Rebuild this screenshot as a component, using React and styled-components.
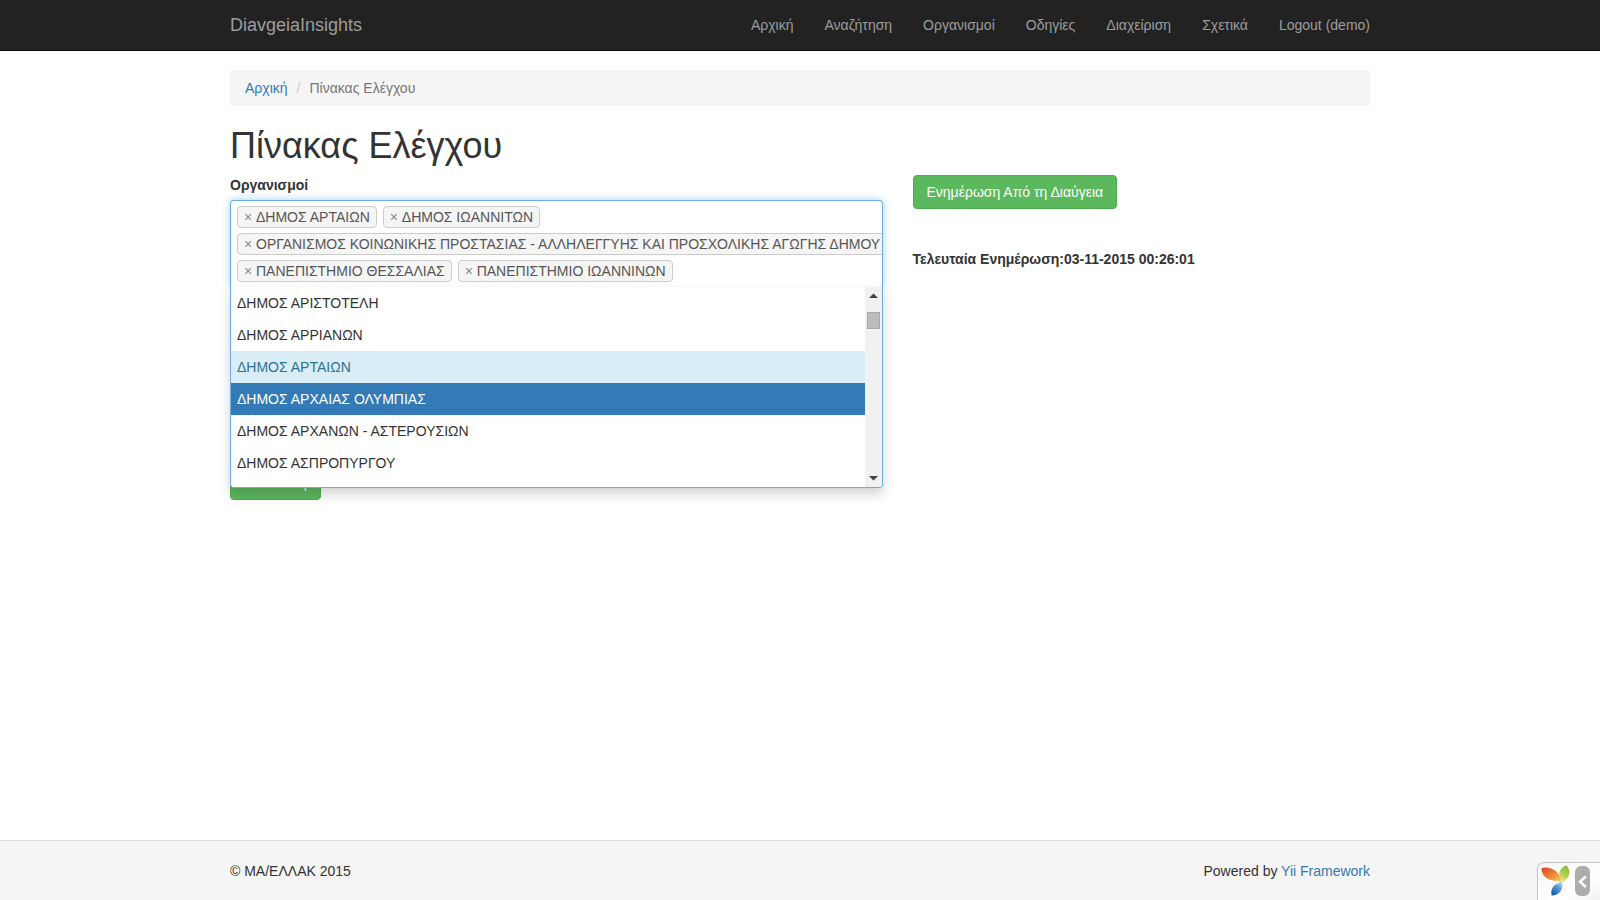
import React from 'react';
import styled, { createGlobalStyle, css } from 'styled-components';

const GlobalStyle = createGlobalStyle`
  *, *::before, *::after { box-sizing: border-box; }
  body {
    margin: 0;
    background: #fff;
    color: #333;
    font: 14px/20px "Liberation Sans", Arial, sans-serif;
  }
  a { color: #337ab7; text-decoration: none; }
  button, input { font: inherit; }
`;

const Page = styled.div`
  min-height: 100vh;
  display: flex;
  flex-direction: column;
`;

const Container = styled.div`
  width: 100%;
  max-width: 1170px;
  margin: 0 auto;
  padding: 0 15px;
`;

const Navbar = styled.nav`
  background: #222;
  border-bottom: 1px solid #080808;
`;

const NavInner = styled(Container)`
  display: flex;
  align-items: center;
  justify-content: space-between;
  height: 50px;
`;

const Brand = styled.a`
  color: #9d9d9d;
  font-size: 18px;
`;

const NavList = styled.ul`
  display: flex;
  gap: 31px;
  list-style: none;
  margin: 0;
  padding: 0;
`;

const NavLink = styled.a`
  color: #9d9d9d;
`;

const Main = styled(Container).attrs({ as: 'main' })`
  padding-top: 19px;
  flex: 1;
`;

const Breadcrumb = styled.ol`
  display: flex;
  list-style: none;
  margin: 0 0 20px;
  padding: 8px 15px;
  background: #f5f5f5;
  border-radius: 4px;
`;

const Crumb = styled.li`
  color: #777;
  & + &::before {
    content: "/";
    padding: 0 9px;
    color: #ccc;
  }
`;

const Title = styled.h1`
  margin: 0 0 9px;
  font-size: 36px;
  line-height: 40px;
  font-weight: 500;
`;

const Columns = styled.div`
  display: grid;
  grid-template-columns: 7fr 5fr;
  margin: 0 -15px;
`;

const Column = styled.div`
  min-width: 0;
  padding: 0 15px;
`;

const Label = styled.label`
  display: block;
  margin-bottom: 5px;
  font-weight: 700;
`;

const Field = styled.div`
  position: relative;
  margin-bottom: 179px;
`;

const Selection = styled.div`
  display: flex;
  flex-wrap: wrap;
  gap: 5px 6px;
  padding: 5px 0 5px 6px;
  overflow: hidden;
  border: 1px solid #66afe9;
  border-bottom: 0;
  border-radius: 4px 4px 0 0;
  background: #fff;
  box-shadow: 0 0 8px rgba(102, 175, 233, 0.6);
`;

const Tag = styled.span`
  display: flex;
  flex: none;
  align-items: center;
  gap: 4px;
  height: 22px;
  padding: 0 6px;
  border: 1px solid #ccc;
  border-radius: 4px;
  background: #f5f5f5;
  color: #555;
  white-space: nowrap;
`;

const RemoveButton = styled.button`
  width: 8px;
  border: 0;
  padding: 0;
  background: none;
  color: #888;
  line-height: 20px;
  text-align: center;
`;

const SearchInput = styled.input`
  flex: 1;
  min-width: 100px;
  height: 22px;
  padding: 0;
  border: 0;
  outline: 0;
  background: transparent;
`;

const Dropdown = styled.div`
  position: absolute;
  top: 100%;
  left: 0;
  right: 0;
  display: flex;
  height: 201px;
  overflow: hidden;
  border: 1px solid #66afe9;
  border-top: 0;
  border-radius: 0 0 4px 4px;
  background: #fff;
  box-shadow: 0 6px 12px rgba(0, 0, 0, 0.18);
`;

const Options = styled.ul`
  flex: 1;
  margin: 0;
  padding: 0;
  list-style: none;
  overflow: hidden;
`;

const Option = styled.li`
  padding: 6px;
  ${({ $state }) => $state === 'selected' && css`
    background: #d9edf7;
    color: #31708f;
  `}
  ${({ $state }) => $state === 'active' && css`
    background: #337ab7;
    color: #fff;
  `}
`;

const ScrollTrack = styled.div`
  display: flex;
  flex-direction: column;
  align-items: center;
  width: 17px;
  background: #f1f1f1;
`;

const ScrollArrow = styled.svg`
  display: block;
  width: 17px;
  height: 17px;
`;

const ScrollThumb = styled.div`
  width: 13px;
  height: 17px;
  margin: 8px 0 auto;
  border: 1px solid #a8a8a8;
  background: #bcbcbc;
`;

const Button = styled.button`
  display: block;
  height: 34px;
  padding: 6px 13px;
  border: 1px solid #4cae4c;
  border-radius: 4px;
  background: #5cb85c;
  color: #fff;
  line-height: 20px;
`;

const UpdateInfo = styled.p`
  margin: 40px 0 0;
  font-weight: 700;
`;

const Footer = styled.footer`
  height: 60px;
  padding-top: 20px;
  border-top: 1px solid #ddd;
  background: #f5f5f5;
`;

const FooterInner = styled(Container)`
  display: flex;
  justify-content: space-between;
`;

const DebugBar = styled.div`
  position: fixed;
  right: 0;
  bottom: 0;
  display: flex;
  gap: 5px;
  width: 63px;
  height: 38px;
  padding: 2px 0 0 3px;
  border: 1px solid #c4c4c4;
  border-width: 1px 0 0 1px;
  border-radius: 7px 0 0 0;
  background: linear-gradient(to bottom right, #f7f7f7, #fff 70%, #f1f1f1);
`;

const Logo = styled.svg`
  width: 29px;
  height: 32px;
`;

const DebugToggle = styled.button`
  width: 15px;
  height: 30px;
  margin-top: 1px;
  padding: 0;
  border: 0;
  border-radius: 6px;
  background: #adadad;
  svg { display: block; }
`;

const navItems = ['Αρχική', 'Αναζήτηση', 'Οργανισμοί', 'Οδηγίες', 'Διαχείριση', 'Σχετικά', 'Logout (demo)'];

const tags = [
  'ΔΗΜΟΣ ΑΡΤΑΙΩΝ',
  'ΔΗΜΟΣ ΙΩΑΝΝΙΤΩΝ',
  'ΟΡΓΑΝΙΣΜΟΣ ΚΟΙΝΩΝΙΚΗΣ ΠΡΟΣΤΑΣΙΑΣ - ΑΛΛΗΛΕΓΓΥΗΣ ΚΑΙ ΠΡΟΣΧΟΛΙΚΗΣ ΑΓΩΓΗΣ ΔΗΜΟΥ',
  'ΠΑΝΕΠΙΣΤΗΜΙΟ ΘΕΣΣΑΛΙΑΣ',
  'ΠΑΝΕΠΙΣΤΗΜΙΟ ΙΩΑΝΝΙΝΩΝ',
];

const options = [
  { name: 'ΔΗΜΟΣ ΑΡΙΣΤΟΤΕΛΗ' },
  { name: 'ΔΗΜΟΣ ΑΡΡΙΑΝΩΝ' },
  { name: 'ΔΗΜΟΣ ΑΡΤΑΙΩΝ', state: 'selected' },
  { name: 'ΔΗΜΟΣ ΑΡΧΑΙΑΣ ΟΛΥΜΠΙΑΣ', state: 'active' },
  { name: 'ΔΗΜΟΣ ΑΡΧΑΝΩΝ - ΑΣΤΕΡΟΥΣΙΩΝ' },
  { name: 'ΔΗΜΟΣ ΑΣΠΡΟΠΥΡΓΟΥ' },
];

function YiiLogo() {
  return (
    <Logo viewBox="0 0 29 32" aria-label="Yii" role="img">
      <defs>
        <linearGradient id="orange" x1="0" y1="0" x2="1" y2="1">
          <stop offset="0" stopColor="#d8452f" />
          <stop offset="0.5" stopColor="#ec8236" />
          <stop offset="1" stopColor="#fbd05b" />
        </linearGradient>
        <linearGradient id="green" x1="0.8" y1="0" x2="0.4" y2="1">
          <stop offset="0" stopColor="#84ba45" />
          <stop offset="0.6" stopColor="#b3d14a" />
          <stop offset="1" stopColor="#e8ea80" />
        </linearGradient>
        <linearGradient id="blue" x1="0.8" y1="0" x2="0.3" y2="1">
          <stop offset="0" stopColor="#d5ebf7" />
          <stop offset="0.45" stopColor="#5b9fd6" />
          <stop offset="1" stopColor="#1557a8" />
        </linearGradient>
      </defs>
      <path fill="url(#green)" d="M25.500 .5C28.600 3.500 29.200 7.800 27.400 11.300C26 14 23.600 15.500 21.600 17.800C20.800 14.500 18.300 13 18.300 9C18.300 5 21.500 1.500 25.500 .5Z" />
      <path fill="url(#orange)" d="M.5 3C5 1.600 11 2.600 15.200 6.500C18.400 9.500 20 13 20.300 16.800C16.500 15.500 11.500 16.500 6.500 13.800C2.500 11.500 .5 7.300 .5 3Z" />
      <path fill="url(#blue)" d="M20.400 14.500C22 18.500 22 23 19.300 26.500C17.200 29.200 14 30.500 10.600 30.500C9.800 27 10.600 23.200 13 20.800C15.300 18.500 19 18.200 20.400 14.500Z" />
    </Logo>
  );
}

export default function App() {
  return (
    <Page>
      <GlobalStyle />
      <Navbar>
        <NavInner>
          <Brand href="#">DiavgeiaInsights</Brand>
          <NavList>
            {navItems.map((item) => (
              <li key={item}><NavLink href="#">{item}</NavLink></li>
            ))}
          </NavList>
        </NavInner>
      </Navbar>

      <Main>
        <Breadcrumb>
          <Crumb><a href="#">Αρχική</a></Crumb>
          <Crumb>Πίνακας Ελέγχου</Crumb>
        </Breadcrumb>
        <Title>Πίνακας Ελέγχου</Title>
        <Columns>
          <Column>
            <Label htmlFor="organizations">Οργανισμοί</Label>
            <Field>
              <Selection>
                {tags.map((tag) => (
                  <Tag key={tag}>
                    <RemoveButton type="button">×</RemoveButton>
                    {tag}
                  </Tag>
                ))}
                <SearchInput id="organizations" type="text" autoComplete="off" />
              </Selection>
              <Dropdown>
                <Options role="listbox" aria-label="Οργανισμοί">
                  {options.map(({ name, state }) => (
                    <Option key={name} role="option" aria-selected={state === 'selected'} $state={state}>
                      {name}
                    </Option>
                  ))}
                </Options>
                <ScrollTrack aria-hidden="true">
                  <ScrollArrow viewBox="0 0 17 17"><path fill="#444" d="M4 11L8.500 6.500L13 11Z" /></ScrollArrow>
                  <ScrollThumb />
                  <ScrollArrow viewBox="0 0 17 17"><path fill="#444" d="M4 6L8.500 10.500L13 6Z" /></ScrollArrow>
                </ScrollTrack>
              </Dropdown>
            </Field>
            <Button type="submit">Αποστολή</Button>
          </Column>
          <Column>
            <Button type="button">Ενημέρωση Από τη Διαύγεια</Button>
            <UpdateInfo>Τελευταία Ενημέρωση:03-11-2015 00:26:01</UpdateInfo>
          </Column>
        </Columns>
      </Main>

      <Footer>
        <FooterInner>
          <span>© ΜΑ/ΕΛΛΑΚ 2015</span>
          <span>Powered by <a href="#">Yii Framework</a></span>
        </FooterInner>
      </Footer>

      <DebugBar>
        <YiiLogo />
        <DebugToggle type="button" aria-label="Toggle debug toolbar">
          <svg width="15" height="30" viewBox="0 0 15 30">
            <path d="M10.800 10.500L5 15.800L10.800 21" fill="none" stroke="#fff" strokeWidth="2.600" />
          </svg>
        </DebugToggle>
      </DebugBar>
    </Page>
  );
}
